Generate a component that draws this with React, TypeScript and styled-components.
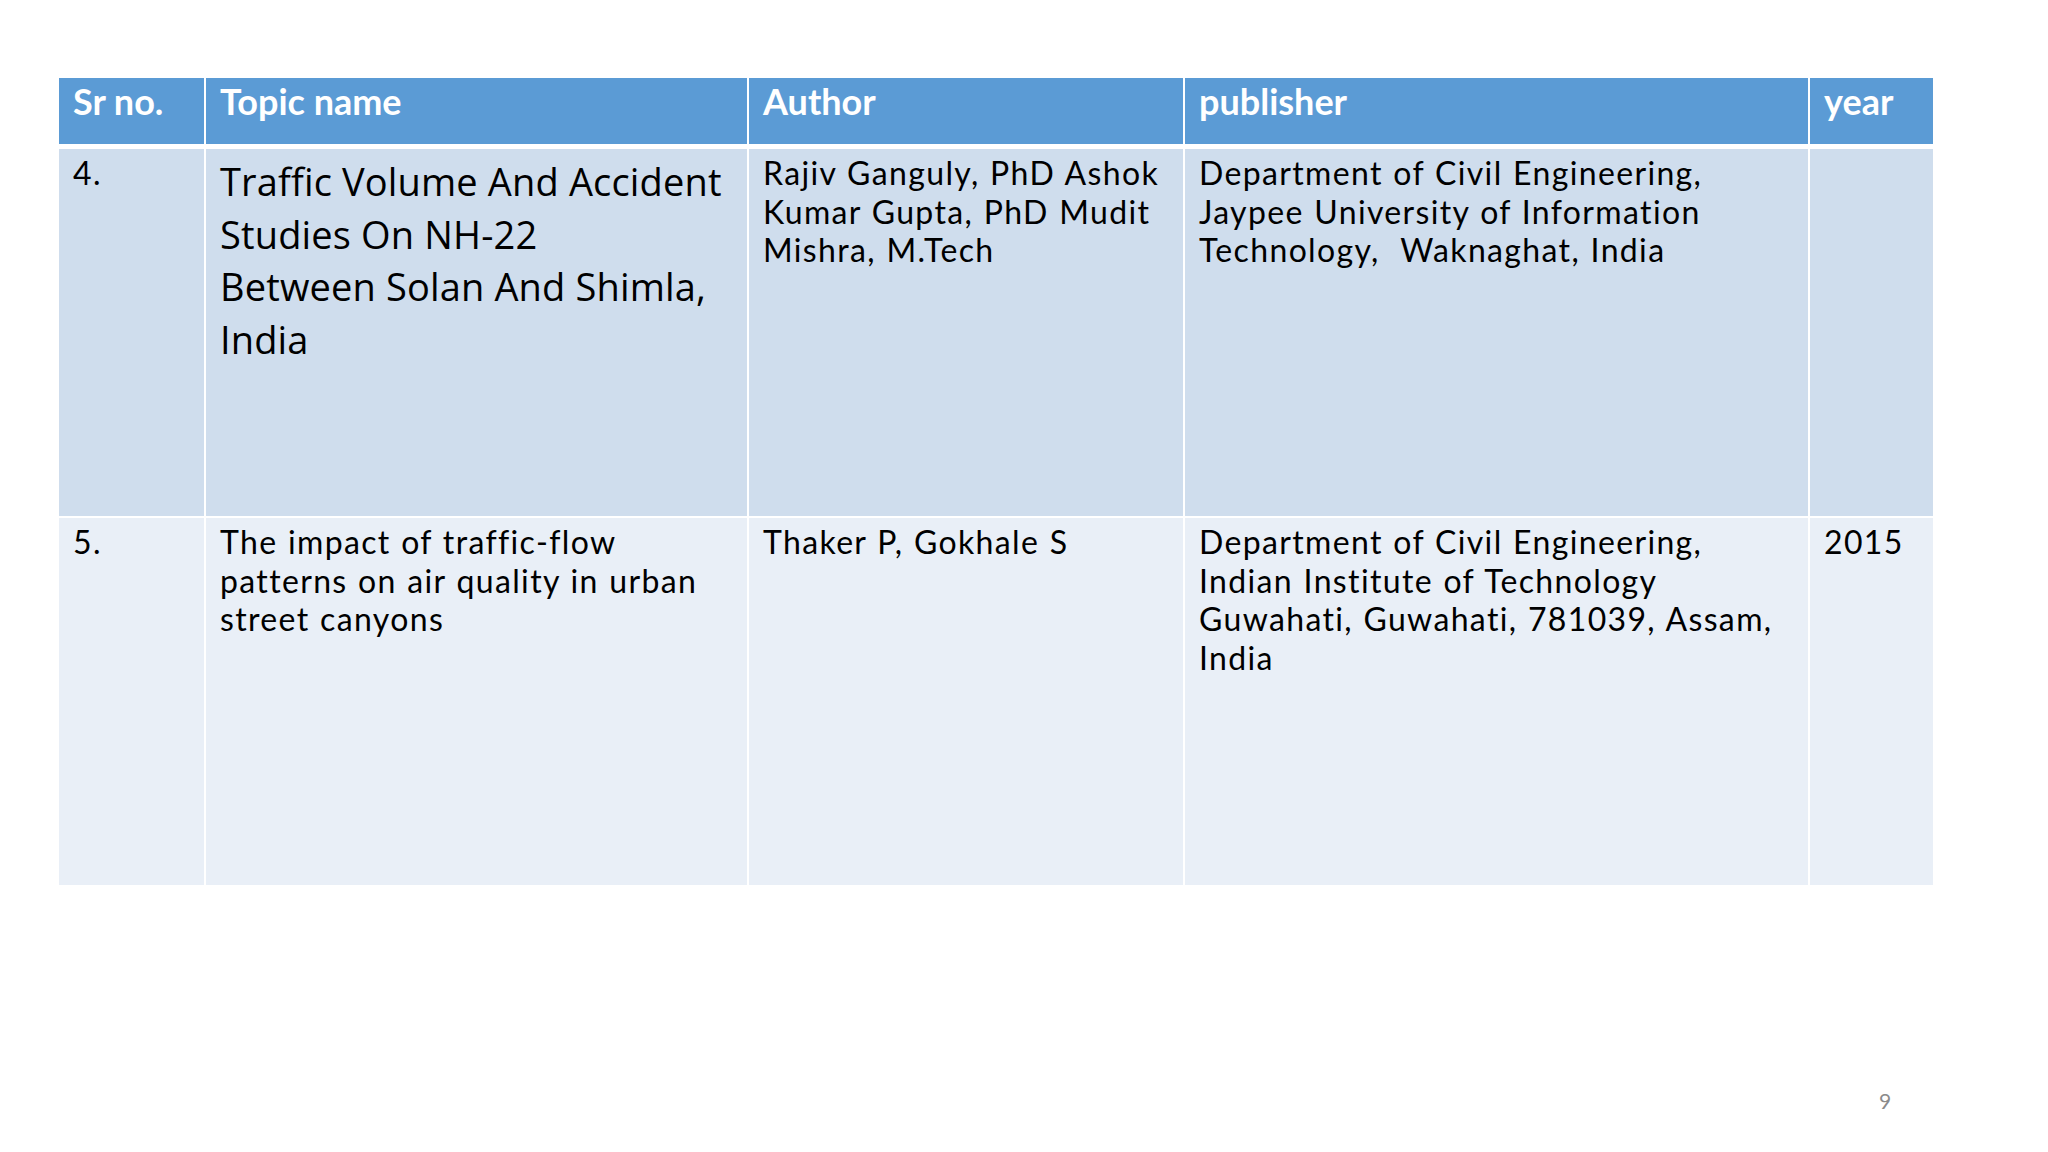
import styled, { createGlobalStyle } from "styled-components";

const GlobalStyle = createGlobalStyle`
  html, body {
    margin: 0;
    padding: 0;
    background: #ffffff;
  }
`;

const Slide = styled.div`
  width: 2048px;
  height: 1152px;
  box-sizing: border-box;
  padding: 78px 0 0 59px;
  display: flex;
  flex-direction: column;
  background: #ffffff;
  font-family: Lato, "Liberation Sans", sans-serif;
`;

const Table = styled.div`
  display: grid;
  width: 1874px;
  grid-template-columns: 145px 541px 434px 623px 123px;
  grid-template-rows: 71px 369px 367px;
  column-gap: 2px;
`;

const HeadCell = styled.div`
  background: #5b9bd5;
  color: #ffffff;
  font-weight: 700;
  font-size: 36px;
  line-height: 44px;
  padding: 1px 14px 0;
  margin-bottom: 5px;
  white-space: nowrap;
`;

const Cell = styled.div<{ $shade: "dark" | "light"; $last?: boolean }>`
  background: ${(p) => (p.$shade === "dark" ? "#cfdded" : "#e9eff7")};
  color: #000000;
  font-size: 32px;
  letter-spacing: 1.35px;
  word-spacing: 1px;
  line-height: 38.6px;
  padding: 5px 14px 0 14px;
  margin-bottom: ${(p) => (p.$last ? "0" : "2px")};
  box-sizing: border-box;
  white-space: nowrap;
`;

const TopicText = styled.div`
  font-family: "Open Sans", "Noto Sans", sans-serif;
  font-size: 38px;
  letter-spacing: 0.15px;
  word-spacing: 0;
  line-height: 52.5px;
  margin-top: 1px;
`;

const PageNumber = styled.div`
  align-self: flex-start;
  margin: 203px 0 0 1820px;
  font-family: Lato, "Liberation Sans", sans-serif;
  font-size: 21px;
  line-height: 26px;
  color: #8b8b8b;
`;

const headers = ["Sr no.", "Topic name", "Author", "publisher", "year"];

export default function App() {
  return (
    <>
      <GlobalStyle />
      <Slide>
        <Table>
          {headers.map((h) => (
            <HeadCell key={h}>{h}</HeadCell>
          ))}

          <Cell $shade="dark">4.</Cell>
          <Cell $shade="dark">
            <TopicText>
              Traffic Volume And Accident
              <br />
              Studies On NH-22
              <br />
              Between Solan And Shimla,
              <br />
              India
            </TopicText>
          </Cell>
          <Cell $shade="dark">
            Rajiv Ganguly, PhD Ashok
            <br />
            Kumar Gupta, PhD Mudit
            <br />
            Mishra, M.Tech
          </Cell>
          <Cell $shade="dark">
            Department of Civil Engineering,
            <br />
            Jaypee University of Information
            <br />
            Technology,&nbsp; Waknaghat, India
          </Cell>
          <Cell $shade="dark" />

          <Cell $shade="light" $last>5.</Cell>
          <Cell $shade="light" $last>
            The impact of traffic-flow
            <br />
            patterns on air quality in urban
            <br />
            street canyons
          </Cell>
          <Cell $shade="light" $last>Thaker P, Gokhale S</Cell>
          <Cell $shade="light" $last>
            Department of Civil Engineering,
            <br />
            Indian Institute of Technology
            <br />
            Guwahati, Guwahati, 781039, Assam,
            <br />
            India
          </Cell>
          <Cell $shade="light" $last>2015</Cell>
        </Table>
        <PageNumber>9</PageNumber>
      </Slide>
    </>
  );
}
